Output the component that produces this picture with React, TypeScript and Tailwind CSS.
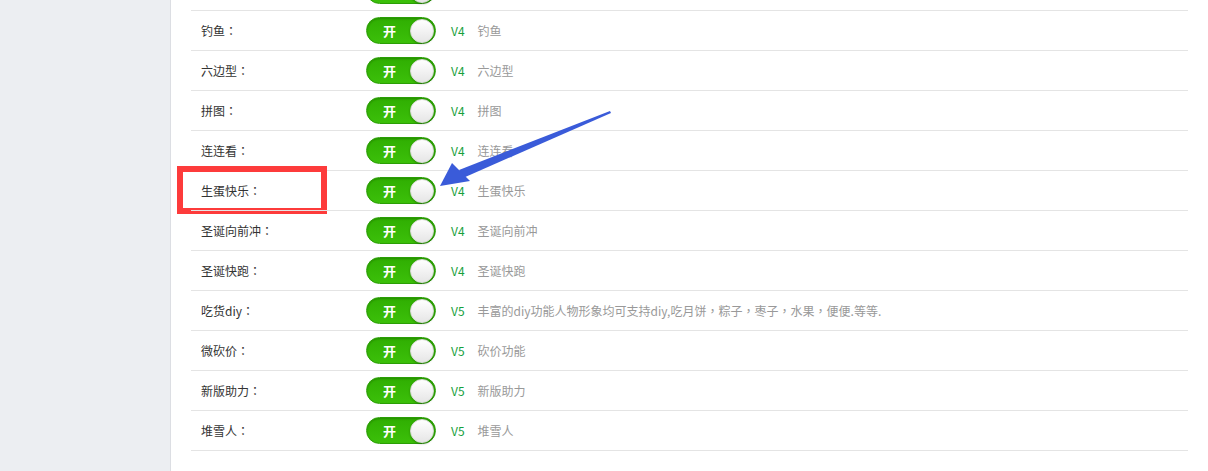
import React from "react";

type Row = { label: string; ver: string; desc: string };

const rows: Row[] = [
  { label: "", ver: "V4", desc: "" },
  { label: "钓鱼", ver: "V4", desc: "钓鱼" },
  { label: "六边型", ver: "V4", desc: "六边型" },
  { label: "拼图", ver: "V4", desc: "拼图" },
  { label: "连连看", ver: "V4", desc: "连连看" },
  { label: "生蛋快乐", ver: "V4", desc: "生蛋快乐" },
  { label: "圣诞向前冲", ver: "V4", desc: "圣诞向前冲" },
  { label: "圣诞快跑", ver: "V4", desc: "圣诞快跑" },
  { label: "吃货diy", ver: "V5", desc: "丰富的diy功能人物形象均可支持diy,吃月饼，粽子，枣子，水果，便便.等等." },
  { label: "微砍价", ver: "V5", desc: "砍价功能" },
  { label: "新版助力", ver: "V5", desc: "新版助力" },
  { label: "堆雪人", ver: "V5", desc: "堆雪人" },
];

const TC = { fontFamily: '"Noto Sans CJK TC", "Noto Sans CJK SC", sans-serif' };

function Desc({ text }: { text: string }) {
  const parts = text.split(/(，)/);
  return (
    <>
      {parts.map((p, i) =>
        p === "，" ? (
          <span key={i} style={TC}>
            ，
          </span>
        ) : (
          <span key={i}>{p}</span>
        )
      )}
    </>
  );
}

function Toggle() {
  return (
    <div className="relative flex h-[27px] w-[70px] items-center rounded-full border border-[#2a9f05] bg-gradient-to-b from-[#2fae02] to-[#3cc00a] shadow-[inset_0_1px_2px_rgba(0,0,0,0.2)]">
      <span className="ml-[16px] text-[13px] font-bold leading-none text-white">开</span>
      <span className="absolute right-[1px] top-1/2 h-[24px] w-[24px] -translate-y-1/2 rounded-full border border-[#d8d8d8] bg-gradient-to-b from-[#ffffff] to-[#e6e6e6] shadow-[0_1px_2px_rgba(0,0,0,0.3)]" />
    </div>
  );
}

export default function App() {
  return (
    <div
      className="relative flex h-[471px] w-[1208px] overflow-hidden bg-white text-[12px]"
      style={{ fontFamily: '"Noto Sans CJK SC", "Noto Sans", sans-serif' }}
    >
      <div className="h-full w-[171px] shrink-0 border-r border-[#dcdee3] bg-[#eceef2]" />
      <div className="flex-1 pl-[20px] pr-[20px]">
        <div className="-mt-[30px] border-b border-[#e4e4e4]">
          {rows.map((r, i) => (
            <div
              key={i}
              className="relative flex h-[40px] items-center border-t border-[#e4e4e4]"
            >
              <div className="w-[175px] shrink-0 pl-[10px] text-[#333]">
                {r.label && (
                  <>
                    {r.label}
                    <span style={TC}>：</span>
                  </>
                )}
              </div>
              <Toggle />
              <span className="ml-[15px] text-[#17a03c]">{r.ver}</span>
              <span className="ml-[13px] text-[#999]">
                <Desc text={r.desc} />
              </span>
              {r.label === "生蛋快乐" && (
                <div className="absolute left-[-14px] top-[-5px] h-[48px] w-[150px] border-[6px] border-[#fd3b3b]" />
              )}
            </div>
          ))}
        </div>
      </div>
      <svg
        className="pointer-events-none absolute left-0 top-0"
        width="1208"
        height="471"
        viewBox="0 0 1208 471"
      >
        <polygon points="610,111 611,113 463,178 459,170" fill="#3a5bd9" />
        <polygon points="440,186 452,163 470,181" fill="#3a5bd9" />
      </svg>
    </div>
  );
}
